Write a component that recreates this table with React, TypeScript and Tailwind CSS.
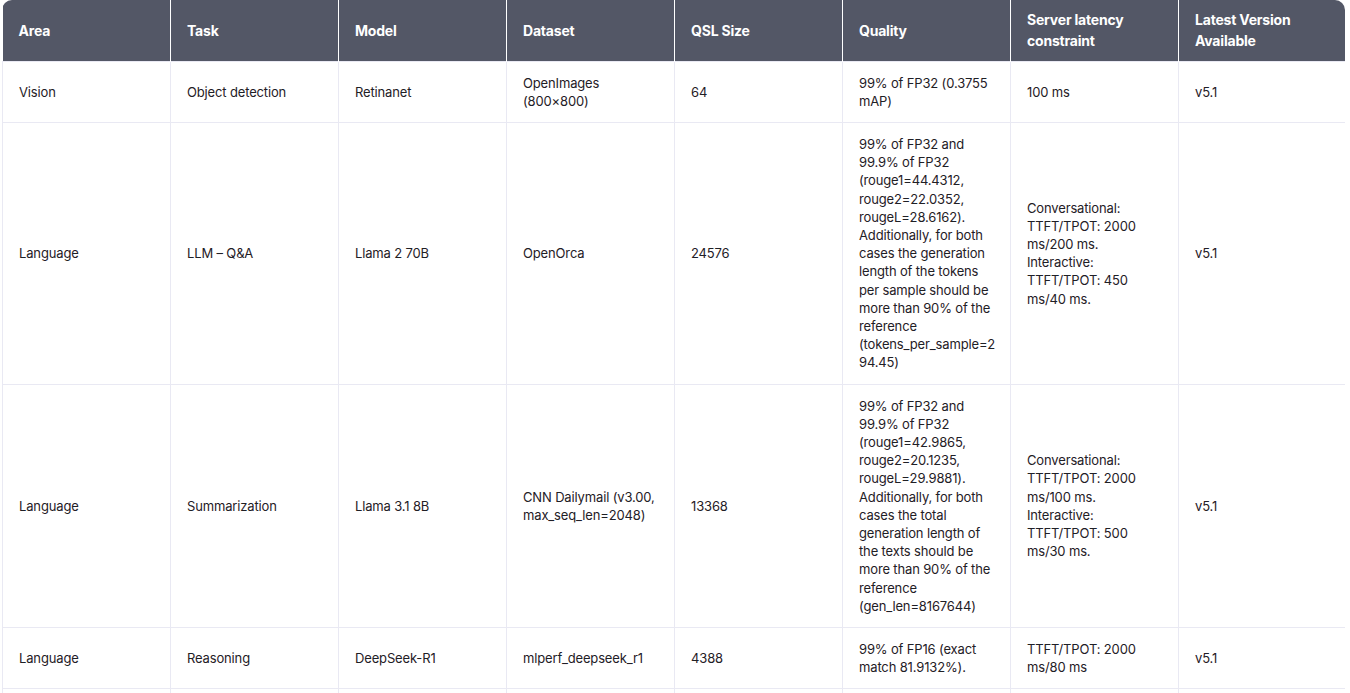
import React from 'react'

const headers = ['Area', 'Task', 'Model', 'Dataset', 'QSL Size', 'Quality', 'Server latency constraint', 'Latest Version Available']

const rows: React.ReactNode[][] = [
  ['Vision', 'Object detection', 'Retinanet', 'OpenImages (800×800)', '64', '99% of FP32 (0.3755 mAP)', '100 ms', 'v5.1'],
  [
    'Language', 'LLM – Q&A', 'Llama 2 70B', 'OpenOrca', '24576',
    <>
      99% of FP32 and 99.9% of FP32 (rouge1=44.4312, rouge2=22.0352, rougeL=28.6162). Additionally, for both cases the
      generation length of the tokens per sample should be more than 90% of the reference{' '}
      <span className="whitespace-nowrap">(tokens_per_sample=2</span>
      <br />
      94.45)
    </>,
    'Conversational: TTFT/TPOT: 2000 ms/200 ms. Interactive: TTFT/TPOT: 450 ms/40 ms.',
    'v5.1',
  ],
  [
    'Language', 'Summarization', 'Llama 3.1 8B', 'CNN Dailymail (v3.00, max_seq_len=2048)', '13368',
    '99% of FP32 and 99.9% of FP32 (rouge1=42.9865, rouge2=20.1235, rougeL=29.9881). Additionally, for both cases the total generation length of the texts should be more than 90% of the reference (gen_len=8167644)',
    'Conversational: TTFT/TPOT: 2000 ms/100 ms. Interactive: TTFT/TPOT: 500 ms/30 ms.',
    'v5.1',
  ],
  ['Language', 'Reasoning', 'DeepSeek-R1', 'mlperf_deepseek_r1', '4388', '99% of FP16 (exact match 81.9132%).', 'TTFT/TPOT: 2000 ms/80 ms', 'v5.1'],
  ['\u00a0', '\u00a0', '\u00a0', '\u00a0', '\u00a0', '\u00a0', '\u00a0', '\u00a0'],
]

export default function App() {
  return (
    <div className="min-h-screen bg-white pl-[2px] pr-[5px]" style={{ fontFamily: 'Inter, "Noto Sans", sans-serif' }}>
      <div className="w-[1343px] rounded-t-[10px] overflow-hidden">
        <table className="w-full table-fixed border-collapse text-[13px] leading-[18.2px] tracking-[-0.15px] text-[#1f2026]">
          <thead>
            <tr className="bg-[#535766]">
              {headers.map((h, i) => (
                <th
                  key={h}
                  className={`w-[168px] h-[61px] px-4 py-2 text-left align-middle text-[14px] leading-[21px] font-bold tracking-[-0.2px] text-white ${i > 0 ? 'border-l border-white' : ''}`}
                >
                  {h}
                </th>
              ))}
            </tr>
          </thead>
          <tbody>
            {rows.map((r, ri) => (
              <tr key={ri}>
                {r.map((c, ci) => (
                  <td key={ci} className="border border-[#e9e9f3] px-4 py-3 align-middle break-words">
                    {c}
                  </td>
                ))}
              </tr>
            ))}
          </tbody>
        </table>
      </div>
    </div>
  )
}
